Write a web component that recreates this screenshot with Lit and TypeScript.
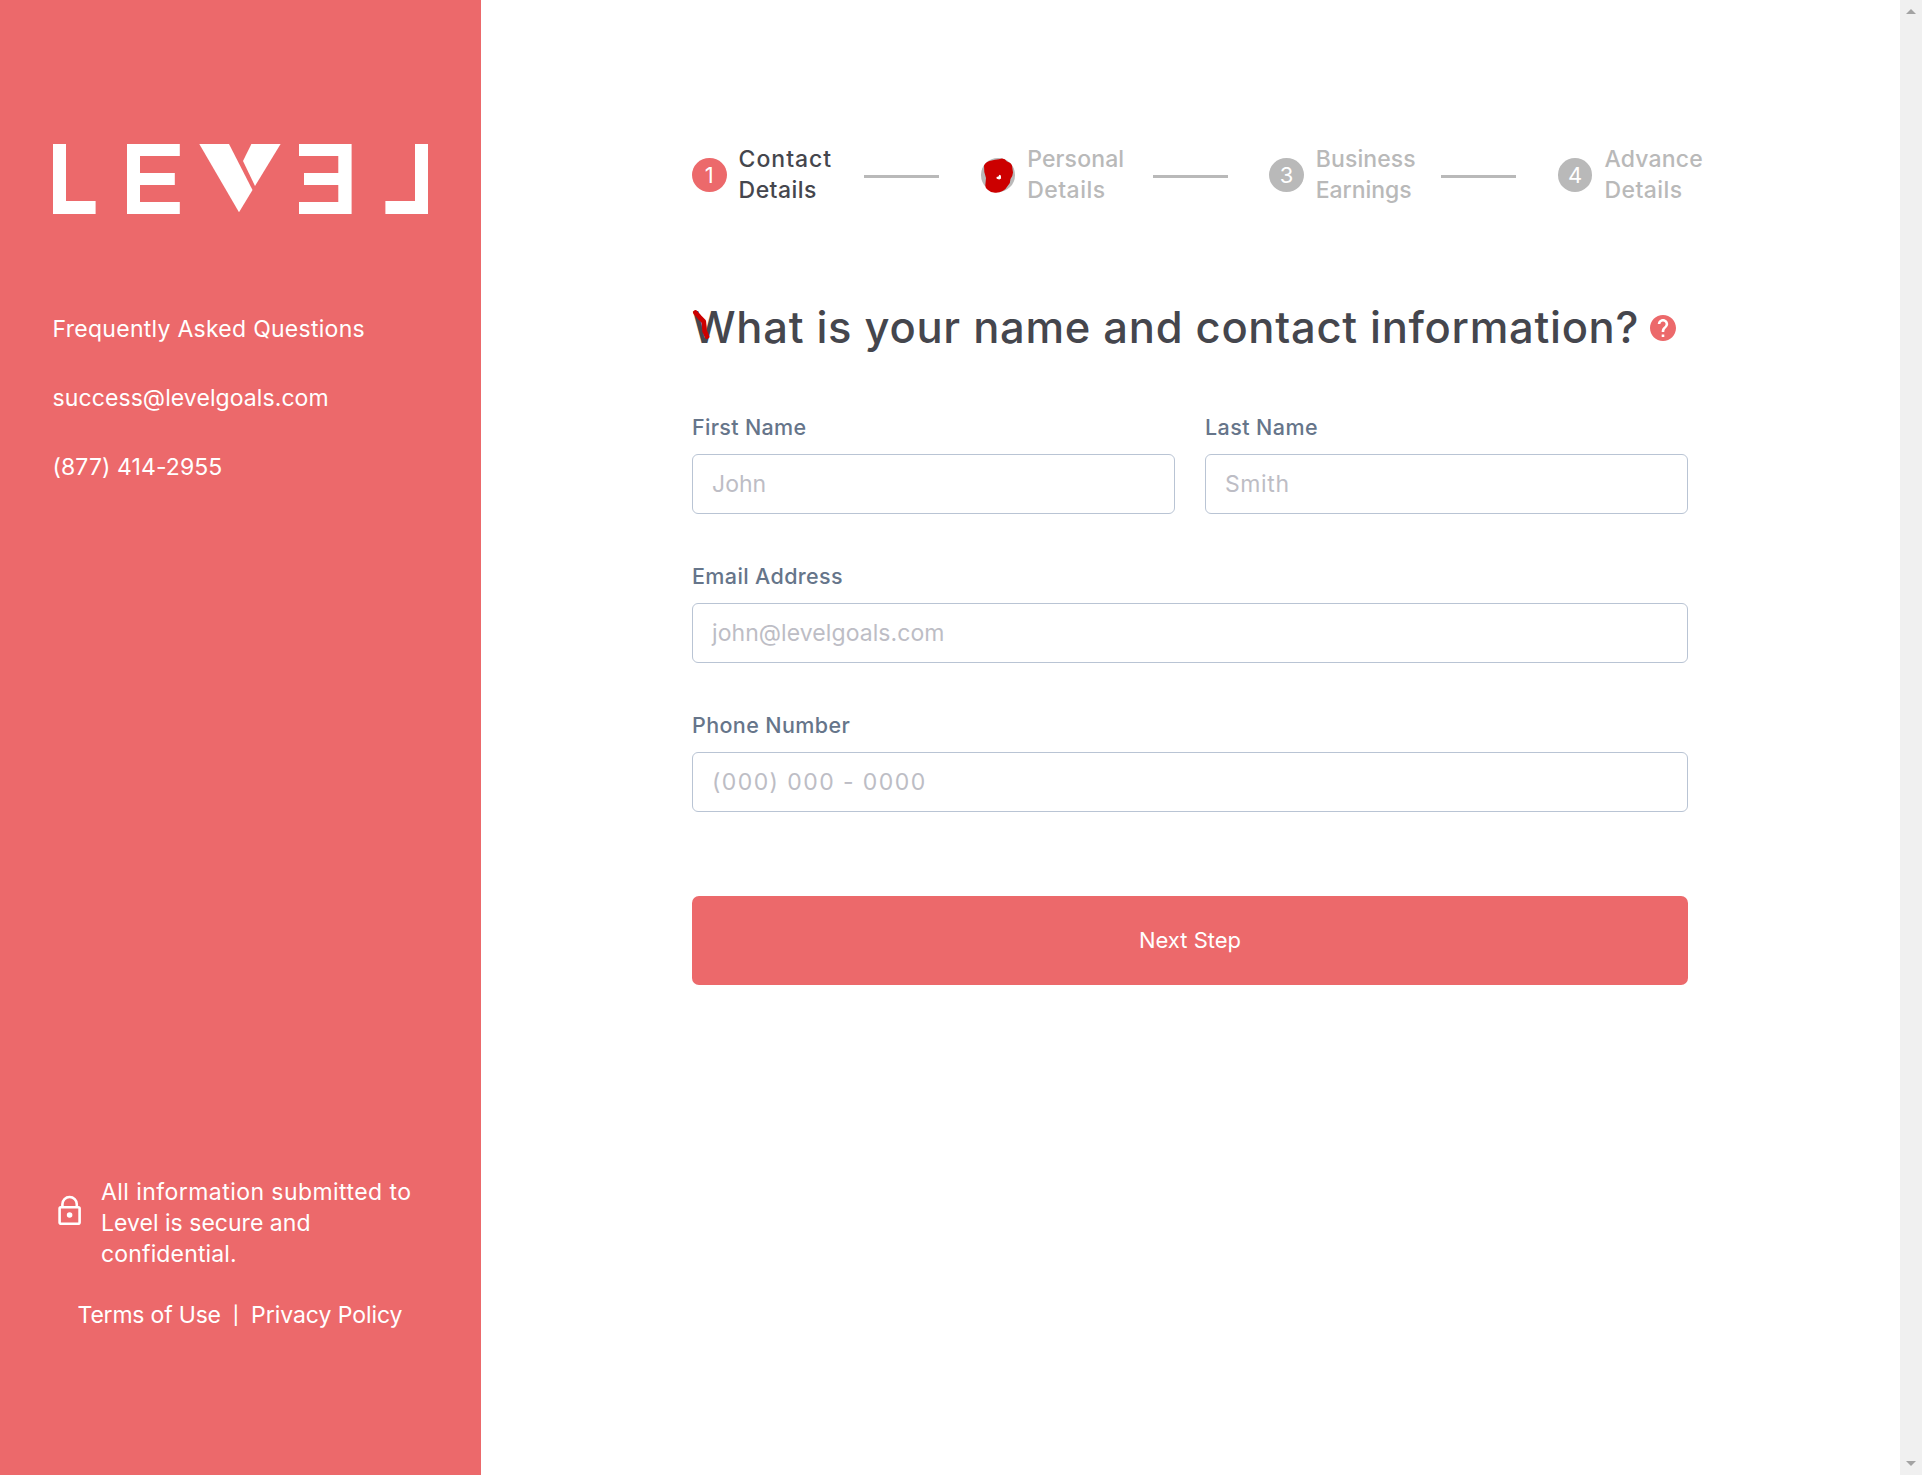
import { LitElement, html, css, svg } from 'lit';
import { customElement, property } from 'lit/decorators.js';
import { classMap } from 'lit/directives/class-map.js';

const RED = css`#ec696b`;
const BODY_FONT = css`Inter, "Liberation Sans", sans-serif`;

/** Run of text with its own letter spacing, in pixels. */
const tracked = (text: string, px: number) =>
  html`<span class="tracked" style="letter-spacing:${px}px">${text}</span>`;

@customElement('level-sidebar')
export class LevelSidebar extends LitElement {
  static styles = css`
    :host {
      display: flex;
      flex-direction: column;
      box-sizing: border-box;
      padding: 144px 53px 144px 52px;
      background: ${RED};
      color: #fff;
      font: 400 23px/31px ${BODY_FONT};
    }
    .logo {
      display: block;
      width: 375px;
      height: 70px;
      margin-left: 1px;
    }
    .links {
      display: flex;
      flex-direction: column;
      gap: 38px;
      margin-top: 100px;
      padding-left: 0.6px;
    }
    .tracked {
      white-space: nowrap;
    }
    .secure {
      display: flex;
      margin-top: auto;
    }
    .lock {
      flex: none;
      width: 24px;
      height: 30px;
      margin: 18px 19px 0 6px;
    }
    .lines {
      display: flex;
      flex-direction: column;
    }
    .legal {
      display: flex;
      justify-content: center;
      align-items: center;
      gap: 12px;
      margin-top: 30px;
      white-space: nowrap;
    }
    .divider {
      font-size: 18px;
      font-weight: 500;
    }
  `;

  render() {
    return html`
      <svg class="logo" viewBox="53 144 375 70" fill="#fff" aria-label="Level">
        <path d="M53 144h13v57h29.6v13H53z" />
        <path d="M127 144h52.8v12H140v17h34.8v12H140v17h39.8v12H127z" />
        <path d="M199.3 144H229l23.5 46-13.5 22.3z" />
        <path d="M251.4 144h29.2L255 186l-12-25z" />
        <path d="M351.6 144H299v12h39.3v17H304v12h34.3v17H299v12h52.6z" />
        <path d="M428 144h-13v57h-29.6v13H428z" />
      </svg>
      <nav class="links">
        <a>${tracked('Frequently Asked Questions', 0.27)}</a>
        <a>${tracked('success@levelgoals.com', 0.08)}</a>
        <a>${tracked('(877) 414-2955', 0.08)}</a>
      </nav>
      <div class="secure">
        <svg class="lock" viewBox="0 0 24 30" fill="none" stroke="#fff" stroke-width="2.6">
          <rect x="1.6" y="12.2" width="20" height="16.6" rx="1.2" />
          <path d="M4.4 12V9.2a7.2 7.2 0 0 1 14.4 0V12" />
          <circle cx="11.6" cy="20" r="2.8" fill="#fff" stroke="none" />
        </svg>
        <div class="lines">
          ${tracked('All information submitted to', 0.44)}
          ${tracked('Level is secure and', 0.02)}
          ${tracked('confidential.', 0.15)}
        </div>
      </div>
      <div class="legal">
        <a>${tracked('Terms of Use', -0.2)}</a><span class="divider">|</span
        ><a>${tracked('Privacy Policy', -0.06)}</a>
      </div>
    `;
  }
}

interface Step {
  lines: [string, number][];
}

const STEPS: Step[] = [
  { lines: [['Contact', 0.98], ['Details', 0.46]] },
  { lines: [['Personal', 0.14], ['Details', 0.46]] },
  { lines: [['Business', 0.09], ['Earnings', -0.05]] },
  { lines: [['Advance', 0.2], ['Details', 0.46]] },
];

@customElement('step-list')
export class StepList extends LitElement {
  @property({ type: Number }) current = 1;

  static styles = css`
    :host {
      display: grid;
      grid-template-columns: repeat(4, 288.6px);
      font: 500 23px/31px ${BODY_FONT};
    }
    .step {
      display: flex;
      color: #b9b9b9;
    }
    .dot {
      position: relative;
      flex: none;
      width: 34.6px;
      height: 34px;
      margin: 14px 12px 0 0;
      border-radius: 50%;
      background: #b9b9b9;
      color: #fff;
      font-size: 22px;
      font-weight: 400;
      line-height: 34px;
      text-align: center;
    }
    .current {
      color: #45464d;
    }
    .current .dot {
      background: ${RED};
    }
    .name {
      display: flex;
      flex-direction: column;
      width: 125.4px;
    }
    .tracked {
      white-space: nowrap;
    }
    .bar {
      width: 75px;
      height: 3px;
      margin-top: 31px;
      background: #b9b9b9;
    }
    .scribble {
      position: absolute;
      left: 0;
      top: 0;
      width: 35px;
      height: 36px;
    }
  `;

  render() {
    return STEPS.map(
      (step, i) => html`
        <div class=${classMap({ step: true, current: i + 1 === this.current })}>
          <div class="dot">
            ${i + 1}
            ${i === 1
              ? html`<svg class="scribble" viewBox="0 0 35 36">
                  ${svg`<path fill="#c00" d="M3 7.5Q4.5 4 8.5 3L14 1.8Q18 1.2 21 .5Q24 .6 26 3.5Q30 4.500 31 7.500L32 14.500Q31.800 18 29.500 21Q29.500 25 27 27.500Q25 31 22 32.800Q18 35.200 14 34.800Q9.500 34.600 7 32Q4.200 30.500 4.300 27.500L5 20Q2.600 14 3 7.500z"/>
                  <path fill="#fff" d="M18.300 16.800l1.600.8.2 3-1.800 1-2.600-.8-.2-1.800 2-.4z"/>`}
                </svg>`
              : ''}
          </div>
          <div class="name">${step.lines.map(([t, px]) => tracked(t, px))}</div>
          ${i < STEPS.length - 1 ? html`<div class="bar"></div>` : ''}
        </div>
      `,
    );
  }
}

@customElement('form-field')
export class FormField extends LitElement {
  @property() label = '';
  @property() hint = '';
  @property({ type: Number }) labelSpacing = 0;
  @property({ type: Number }) hintSpacing = 0;

  static styles = css`
    :host {
      display: flex;
      flex-direction: column;
      gap: 13px;
      font-family: ${BODY_FONT};
    }
    .label {
      color: #66758a;
      font-size: 21.5px;
      font-weight: 500;
      line-height: 28px;
      white-space: nowrap;
    }
    .box {
      box-sizing: border-box;
      height: 60px;
      padding: 0 19px;
      border: 1px solid #b9c4d4;
      border-radius: 6px;
      color: #bdbdc5;
      font-size: 23px;
      line-height: 58px;
      white-space: nowrap;
    }
  `;

  render() {
    return html`
      <div class="label">${tracked(this.label, this.labelSpacing)}</div>
      <div class="box">${tracked(this.hint, this.hintSpacing)}</div>
    `;
  }
}

@customElement('app-root')
export class AppRoot extends LitElement {
  static styles = css`
    :host {
      display: grid;
      grid-template-columns: 481px 1fr 22px;
      height: 1475px;
      overflow: hidden;
      background: #fff;
      font-family: ${BODY_FONT};
    }
    .main {
      box-sizing: border-box;
      padding: 144px 0 0 211px;
    }
    .form {
      width: 996px;
    }
    .title {
      position: relative;
      display: flex;
      align-items: center;
      gap: 11px;
      margin: 91px 0 56px;
      color: #45464d;
      font-size: 43.5px;
      font-weight: 500;
      line-height: 60px;
      white-space: nowrap;
    }
    .help {
      width: 26px;
      height: 26px;
      margin-top: 2px;
    }
    .mark {
      position: absolute;
      left: 0;
      top: 12px;
      width: 20px;
      height: 32px;
    }
    .pair {
      display: grid;
      grid-template-columns: 1fr 1fr;
      gap: 30px;
    }
    .fields {
      display: flex;
      flex-direction: column;
      gap: 48px;
    }
    .next {
      display: block;
      width: 100%;
      height: 89px;
      margin-top: 84px;
      border: 0;
      border-radius: 7px;
      background: ${RED};
      color: #fff;
      font: 400 22px/89px ${BODY_FONT};
      padding: 0;
    }
    .scrollbar {
      display: flex;
      flex-direction: column;
      align-items: center;
      justify-content: space-between;
      padding: 9px 0;
      background: #f0f0f0;
    }
    .arrow {
      width: 10px;
      height: 5px;
    }
  `;

  render() {
    return html`
      <level-sidebar></level-sidebar>
      <main class="main">
        <step-list current="1"></step-list>
        <div class="form">
          <div class="title">
            ${tracked('What is your name and contact information?', 0.71)}
            <svg class="help" viewBox="2 2 20 20" fill="#ec696b">
              <path
                d="M12 2C6.48 2 2 6.48 2 12s4.48 10 10 10 10-4.48 10-10S17.52 2 12 2zm1 17h-2v-2h2v2zm2.07-7.75l-.9.92C13.45 12.9 13 13.5 13 15h-2v-.5c0-1.1.45-2.1 1.17-2.83l1.24-1.26c.37-.36.59-.86.59-1.41 0-1.1-.9-2-2-2s-2 .9-2 2H8c0-2.21 1.79-4 4-4s4 1.79 4 4c0 .88-.36 1.68-.93 2.25z"
              />
            </svg>
            <svg class="mark" viewBox="0 0 20 32" fill="none" stroke="#c00" stroke-width="4.8" stroke-linecap="round" stroke-linejoin="round">
              <path d="M3.4 3.5L7.5 8.2 11.7 12.5 12.3 18 12.6 22 15 27.500" />
            </svg>
          </div>
          <div class="fields">
            <div class="pair">
              <form-field label="First Name" hint="John" .labelSpacing=${0.32} .hintSpacing=${0}></form-field>
              <form-field label="Last Name" hint="Smith" .labelSpacing=${0.42} .hintSpacing=${0.6}></form-field>
            </div>
            <form-field label="Email Address" hint="john@levelgoals.com" .labelSpacing=${0.37} .hintSpacing=${0.07}></form-field>
            <form-field label="Phone Number" hint="(000) 000 - 0000" .labelSpacing=${0.38} .hintSpacing=${1.42}></form-field>
          </div>
          <button class="next">${tracked('Next Step', 0)}</button>
        </div>
      </main>
      <div class="scrollbar">
        <svg class="arrow" viewBox="0 0 10 5" fill="#a3a3a3"><path d="M5 0l5 5H0z" /></svg>
        <svg class="arrow" viewBox="0 0 10 5" fill="#a3a3a3"><path d="M5 5l5-5H0z" /></svg>
      </div>
    `;
  }
}
